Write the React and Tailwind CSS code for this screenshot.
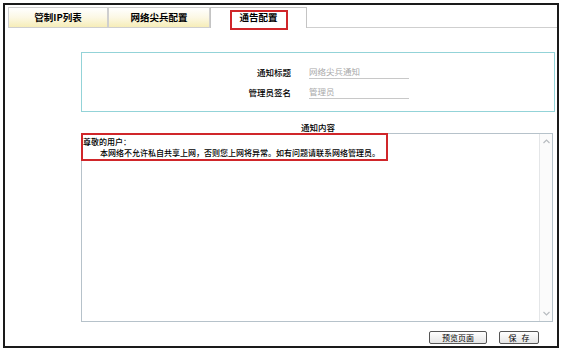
import React from "react";

const cjk = { fontFamily: '"Noto Sans CJK SC", "Noto Sans", sans-serif' };

function Tab({ label, active, w, boxed }) {
  if (active) {
    return (
      <div
        className="relative flex h-[21px] items-center justify-center border-x border-t border-[#c4c4c4] bg-white"
        style={{ width: w }}
      >
        <span className="text-[9.5px] font-bold leading-none text-black">{label}</span>
        {boxed && (
          <div className="pointer-events-none absolute left-[19px] top-[2px] h-[20px] w-[58px] border-2 border-[#d0262a]" />
        )}
      </div>
    );
  }
  return (
    <div
      className="flex h-[21px] items-center justify-center border border-[#cfcfcf] bg-gradient-to-b from-white via-[#fcf8e4] to-[#f6edb8]"
      style={{ width: w }}
    >
      <span className="text-[9.5px] font-bold leading-none text-black">{label}</span>
    </div>
  );
}

function Chevron({ up }) {
  return (
    <svg width="9" height="7" viewBox="0 0 9 7" className="block">
      {up ? (
        <path d="M1.5 5 L4.5 2 L7.5 5" fill="none" stroke="#b8bcc0" strokeWidth="1.2" />
      ) : (
        <path d="M1.5 2 L4.5 5 L7.5 2" fill="none" stroke="#b8bcc0" strokeWidth="1.2" />
      )}
    </svg>
  );
}

function Field({ label, placeholder }) {
  return (
    <div className="flex h-[16px] items-end">
      <div className="w-[209px] pb-[3px] text-right text-[8.5px] font-medium leading-none text-black">{label}</div>
      <div className="ml-[18px] w-[100px] border-b border-[#c8c8c8] pb-[3px] text-[8.5px] leading-none text-[#a8a8a8]">
        {placeholder}
      </div>
    </div>
  );
}

export default function App() {
  return (
    <div className="h-[352px] w-[563px] overflow-hidden bg-white" style={cjk}>
      <div className="ml-[3px] mt-[3px] flex h-[345px] w-[556px] flex-col border-2 border-[#1a1a1a] pl-[3px] pt-[2px]">
        <div className="flex items-end">
          <Tab label="管制IP列表" w={100} />
          <Tab label="网络尖兵配置" w={102} />
          <Tab label="通告配置" w={97} active boxed />
          <div className="h-[21px] flex-1 border-b border-[#cfcfcf]" />
        </div>

        <div className="ml-[73px] mr-[2px] flex flex-col">
          <div className="mt-[24px] flex h-[60px] flex-col gap-[4px] border border-[#93d3d8] pt-[10px]">
            <Field label="通知标题" placeholder="网络尖兵通知" />
            <Field label="管理员签名" placeholder="管理员" />
          </div>

          <div className="mt-[10px] text-center text-[8.5px] font-medium leading-[11px] text-black">通知内容</div>

          <div className="relative h-[189px] w-[472px] border border-[#b6c2ca] bg-white">
            <div className="pl-[1px] pt-[2px] text-[8px] font-medium leading-[11px] text-black">
              <div>尊敬的用户：</div>
              <div className="pl-[17px]">本网络不允许私自共享上网，否则您上网将异常。如有问题请联系网络管理员。</div>
            </div>
            <div className="absolute bottom-0 right-0 top-0 flex w-[13px] flex-col items-center justify-between border-l border-[#e4e6e8] bg-[#fbfbfb] py-[4px]">
              <Chevron up />
              <Chevron />
            </div>
            <div className="pointer-events-none absolute left-[-1px] top-[-1px] h-[28px] w-[307px] border-2 border-[#d0262a]" />
          </div>

          <div className="mr-[16px] mt-[9px] flex justify-end gap-[12px]">
            <button className="flex h-[13px] w-[58px] items-center justify-center rounded-[2px] border border-[#555] bg-gradient-to-b from-white to-[#e6e6e6] text-[8px] leading-none text-black">
              预览页面
            </button>
            <button className="flex h-[13px] w-[40px] items-center justify-center gap-[5px] rounded-[2px] border border-[#555] bg-gradient-to-b from-white to-[#e6e6e6] text-[8px] leading-none text-black">
              <span>保</span>
              <span>存</span>
            </button>
          </div>
        </div>
      </div>
    </div>
  );
}
